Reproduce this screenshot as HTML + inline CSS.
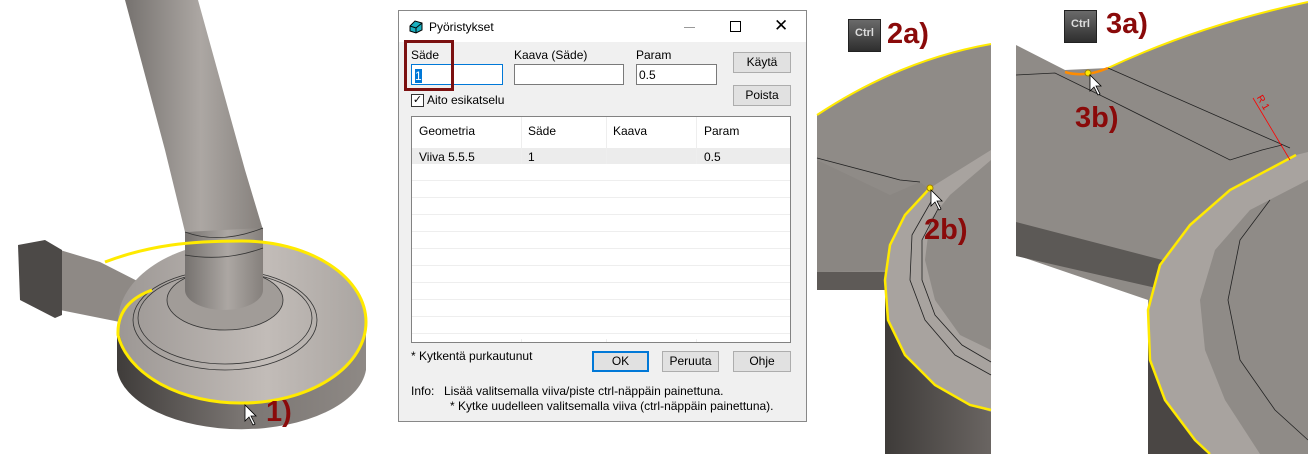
<!DOCTYPE html>
<html><head><meta charset="utf-8"><style>
body{margin:0;width:1308px;height:454px;overflow:hidden;background:#fff;position:relative;font-family:"Liberation Sans",sans-serif;}
.a{position:absolute;}
.t{font-size:12px;color:#000;white-space:nowrap;}
.dlg{left:398px;top:10px;width:407px;height:410px;background:#f0f0f0;border:1px solid #888;}
.inp{background:#fff;border:1px solid #7a7a7a;height:21px;box-sizing:border-box;}
.btn{background:#e1e1e1;border:1px solid #adadad;box-sizing:border-box;text-align:center;font-size:12px;line-height:19px;}
.lbl{font-family:"Liberation Sans",sans-serif;font-weight:bold;color:#8a0a0a;font-size:29px;}
.ctrl{width:33px;height:33px;background:linear-gradient(#6a6a6a,#2e2e2e);border:1px solid #222;box-sizing:border-box;color:#ddd;font-size:11px;font-weight:bold;text-align:center;line-height:27px;}
</style></head><body>
<svg class="a" style="left:0;top:0" width="1308" height="454">
<defs>
<linearGradient id="tube" x1="0" x2="1"><stop offset="0" stop-color="#76726f"/><stop offset=".55" stop-color="#aca7a3"/><stop offset="1" stop-color="#85807c"/></linearGradient>
<linearGradient id="side" x1="0" x2="1"><stop offset="0" stop-color="#3f3c3a"/><stop offset=".5" stop-color="#7a7572"/><stop offset="1" stop-color="#8e8985"/></linearGradient>
<linearGradient id="top" x1="0" x2="1"><stop offset="0" stop-color="#9c9794"/><stop offset=".6" stop-color="#c2bcb8"/><stop offset="1" stop-color="#aaa5a1"/></linearGradient>
<linearGradient id="dark" x1="0" x2="1"><stop offset="0" stop-color="#3e3b39"/><stop offset="1" stop-color="#6a6562"/></linearGradient>
</defs>
<!-- left model -->
<path d="M125,0 L198,0 L245,170 L263,230 L185,232 L165,150 Z" fill="url(#tube)"/>
<path d="M60,250 L100,262 L155,290 L135,325 L60,310 Z" fill="#8e8985"/>
<path d="M18,245 L45,240 L62,250 L62,315 L55,318 L20,300 Z" fill="#4c4947"/>
<path d="M117,330 L117,370 A125,65 0 0 0 366,370 L366,330 Z" fill="url(#side)"/>
<ellipse cx="242" cy="322" rx="124" ry="81" fill="url(#top)"/>
<ellipse cx="225" cy="320" rx="92" ry="50" fill="none" stroke="#333" stroke-width=".8"/>
<ellipse cx="225" cy="318" rx="87" ry="46" fill="none" stroke="#333" stroke-width=".8"/>
<ellipse cx="225" cy="300" rx="58" ry="30" fill="#a19c98" stroke="#333" stroke-width=".8"/>
<path d="M185,232 L263,228 L263,290 A39,20 0 0 1 185,290 Z" fill="url(#tube)"/>
<path d="M185,232 Q220,245 263,228 M185,255 Q225,262 263,248" fill="none" stroke="#333" stroke-width=".8"/>
<path d="M105,262 C150,245 190,241 242,241 A124,81 0 0 1 242,403 A124,81 0 0 1 118,335 C117,312 130,298 152,290" fill="none" stroke="#ffea00" stroke-width="3"/>
<!-- panel 2 -->
<path d="M817,115 Q900,60 991,44 L991,454 L885,454 L885,290 L817,290 Z" fill="#8f8b87"/>
<path d="M817,160 L890,195 L920,182 L930,190 L900,225 L888,270 L817,272 Z" fill="#8a8682"/>
<path d="M817,272 L885,272 L885,290 L817,290 Z" fill="#5e5a57"/>
<path d="M885,285 L888,320 L905,355 L935,385 L970,405 L991,412 L991,454 L885,454 Z" fill="url(#dark)"/>
<path d="M930,188 L905,215 L890,245 L885,280 L888,320 L905,355 L935,385 L970,405 L991,410 L991,350 L960,335 L935,300 L925,260 L930,220 L950,195 L991,160 L991,150 Z" fill="#a8a39f"/>
<path d="M930,188 L905,215 L890,245 L885,280 L888,320 L905,355 L935,385 L970,405 L991,410" fill="none" stroke="#ffea00" stroke-width="2.5"/>
<path d="M817,115 Q900,60 991,44" fill="none" stroke="#ffea00" stroke-width="2"/>
<path d="M817,158 L900,180 L920,182 M932,200 L912,235 L910,280 L925,320 L955,355 L991,375 M940,205 L922,240 L922,280 L935,315 L962,345 L991,362" fill="none" stroke="#222" stroke-width=".8"/>
<circle cx="930" cy="188" r="3" fill="#ffea00" stroke="#a08000"/>
<path d="M931,190 L931,206 L935,202 L939,210 L941,209 L937,201 L942,201 Z" fill="#fff" stroke="#000" stroke-width=".8"/>
<!-- panel 3 -->
<path d="M1016,45 L1065,70 L1108,68 Q1200,25 1308,2 L1308,454 L1210,454 L1165,400 L1150,360 L1148,300 L1016,255 Z" fill="#8f8b87"/>
<path d="M1016,222 L1170,262 L1165,290 L1016,256 Z" fill="#5c5956"/>
<path d="M1148,300 L1150,360 L1165,400 L1195,440 L1210,454 L1148,454 Z" fill="#4a4644"/>
<path d="M1296,155 L1230,190 L1190,225 L1160,265 L1148,310 L1150,360 L1165,400 L1195,440 L1210,454 L1260,454 L1225,400 L1205,350 L1200,300 L1215,250 L1250,210 L1308,180 L1308,152 Z" fill="#a8a39f"/>
<path d="M1296,155 L1230,190 L1190,225 L1160,265 L1148,310 L1150,360 L1165,400 L1195,440 L1210,454" fill="none" stroke="#ffea00" stroke-width="2.5"/>
<path d="M1108,68 Q1200,25 1308,2" fill="none" stroke="#ffea00" stroke-width="2"/>
<path d="M1065,72 Q1085,78 1108,68" fill="none" stroke="#ff8c00" stroke-width="2.5"/>
<path d="M1016,75 L1055,73 L1110,100 L1230,160 L1262,150 L1282,145 M1108,68 L1290,148" fill="none" stroke="#222" stroke-width=".8"/>
<path d="M1270,200 L1240,240 L1228,300 L1240,360 L1275,410 L1308,440" fill="none" stroke="#222" stroke-width=".8"/>
<path d="M1253,98 L1290,160" stroke="#f00" stroke-width=".8"/>
<text x="1255" y="100" fill="#e00" font-size="10" font-family="Liberation Sans" transform="rotate(60 1258 100)">R 1</text>
<circle cx="1088" cy="73" r="3" fill="#ffea00" stroke="#a08000"/>
<path d="M1090,75 L1090,91 L1094,87 L1098,95 L1100,94 L1096,86 L1101,86 Z" fill="#fff" stroke="#000" stroke-width=".8"/>
<path d="M245,405 L245,421 L249,417 L253,425 L255,424 L251,416 L256,416 Z" fill="#fff" stroke="#000" stroke-width=".8"/>
</svg>
<div class="a ctrl" style="left:848px;top:19px">Ctrl</div>
<div class="a lbl" style="left:887px;top:18px">2a)</div>
<div class="a lbl" style="left:924px;top:214px">2b)</div>
<div class="a ctrl" style="left:1064px;top:10px">Ctrl</div>
<div class="a lbl" style="left:1106px;top:8px">3a)</div>
<div class="a lbl" style="left:1075px;top:102px">3b)</div>
<div class="a lbl" style="left:266px;top:396px">1)</div>

<div class="a dlg">
<div class="a" style="left:0;top:0;width:407px;height:31px;background:#fff"></div>
<svg class="a" style="left:10px;top:9px" width="14" height="14"><path d="M1,6 L6,1 L13,3 L13,10 L7,13 L1,11Z" fill="#1ab0c0" stroke="#000"/><path d="M1,6 L7,8 L13,3 M7,8 L7,13" stroke="#000" fill="none"/></svg>
<div class="a t" style="left:30px;top:9px;font-size:12px">Pyöristykset</div>
<div class="a" style="left:285px;top:16px;width:11px;height:1px;background:#999"></div>
<div class="a" style="left:331px;top:10px;width:9px;height:9px;border:1px solid #000"></div>
<div class="a t" style="left:375px;top:5px;font-size:17px">✕</div>
<div class="a t" style="left:12px;top:37px">Säde</div>
<div class="a inp" style="left:12px;top:53px;width:92px;border-color:#0078d7"><span style="background:#0078d7;color:#fff;font-size:12px;margin-left:3px;position:relative;top:2px">1</span></div>
<div class="a" style="left:5px;top:29px;width:44px;height:45px;border:3px solid #7b1010"></div>
<div class="a t" style="left:115px;top:37px">Kaava (Säde)</div>
<div class="a inp" style="left:115px;top:53px;width:110px"></div>
<div class="a t" style="left:237px;top:37px">Param</div>
<div class="a inp t" style="left:237px;top:53px;width:81px;padding:3px 2px">0.5</div>
<div class="a btn" style="left:334px;top:41px;width:58px;height:21px">Käytä</div>
<div class="a btn" style="left:334px;top:74px;width:58px;height:21px">Poista</div>
<div class="a" style="left:12px;top:83px;width:11px;height:11px;border:1px solid #333;background:#fff;font-size:11px;line-height:10px;text-align:center">✓</div>
<div class="a t" style="left:28px;top:82px">Aito esikatselu</div>
<div class="a" style="left:12px;top:105px;width:378px;height:225px;background:#fff;border:1px solid #828282">
<div class="a" style="left:0;top:31px;width:378px;height:16px;background:#ececec"></div>
<div class="a" style="left:109px;top:0;width:1px;height:225px;background:#eee"></div>
<div class="a" style="left:194px;top:0;width:1px;height:225px;background:#eee"></div>
<div class="a" style="left:284px;top:0;width:1px;height:225px;background:#eee"></div>
<div class="a" style="left:0;top:47px;width:378px;height:175px;background:repeating-linear-gradient(#fff 0,#fff 16px,#eee 16px,#eee 17px)"></div>
<div class="a t" style="left:7px;top:7px">Geometria</div><div class="a t" style="left:116px;top:7px">Säde</div><div class="a t" style="left:201px;top:7px">Kaava</div><div class="a t" style="left:292px;top:7px">Param</div>
<div class="a t" style="left:7px;top:33px">Viiva 5.5.5</div><div class="a t" style="left:116px;top:33px">1</div><div class="a t" style="left:292px;top:33px">0.5</div>
</div>
<div class="a t" style="left:12px;top:338px">* Kytkentä purkautunut</div>
<div class="a btn" style="left:193px;top:340px;width:57px;height:21px;border:2px solid #0078d7;line-height:17px">OK</div>
<div class="a btn" style="left:263px;top:340px;width:57px;height:21px">Peruuta</div>
<div class="a btn" style="left:334px;top:340px;width:58px;height:21px">Ohje</div>
<div class="a t" style="left:12px;top:373px">Info:</div>
<div class="a t" style="left:45px;top:373px">Lisää valitsemalla viiva/piste ctrl-näppäin painettuna.</div>
<div class="a t" style="left:51px;top:388px">* Kytke uudelleen valitsemalla viiva (ctrl-näppäin painettuna).</div>
</div>
</body></html>
